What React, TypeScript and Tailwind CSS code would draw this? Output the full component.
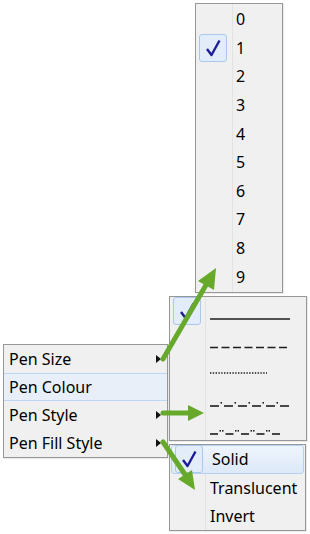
import { FC, ReactNode } from "react";

const FONT = "font-['Noto_Sans',sans-serif] text-[16px] text-black";

const Check: FC = () => (
  <div className="w-[28px] h-[28px] rounded-[3px] border border-[#a9c8ee] bg-[#e3edfa] flex items-center justify-center">
    <svg width="18" height="20" viewBox="0 0 18 20">
      <path d="M3 11 L7.5 17 L15.5 2.5" fill="none" stroke="#1d1d98" strokeWidth="2.4" strokeLinejoin="round" />
    </svg>
  </div>
);

const Arrow: FC = () => (
  <svg width="5" height="8" viewBox="0 0 5 8" className="ml-auto mr-[6px]">
    <path d="M0 0 L5 4 L0 8 Z" fill="#111" />
  </svg>
);

// gutter + separator for menus that show checks
const GutterRow: FC<{ checked?: boolean; hot?: boolean; children: ReactNode }> = ({ checked, hot, children }) => (
  <div
    className={[
      "relative flex items-center h-[28.6px]",
      hot ? "bg-gradient-to-b from-[#eef4fc] to-[#dde9f8] border border-[#b5d0f2] rounded-[3px] mx-[1px]" : "",
    ].join(" ")}
  >
    <div className="w-[34px] flex items-center justify-center shrink-0">{checked ? <Check /> : null}</div>
    <div className="pl-[6px] flex items-center">{children}</div>
  </div>
);

const NUMBERS = ["0", "1", "2", "3", "4", "5", "6", "7", "8", "9"];

const StyleLine: FC<{ kind: string }> = ({ kind }) => {
  const c = "#1e1e1e";
  if (kind === "solid")
    return (
      <svg width="82" height="29">
        <line x1="0" y1="22" x2="80" y2="22" stroke={c} strokeWidth="1.6" />
      </svg>
    );
  if (kind === "dash")
    return (
      <svg width="82" height="29">
        <line x1="0" y1="22.5" x2="80" y2="22.5" stroke={c} strokeWidth="1.6" strokeDasharray="8 3.5" />
      </svg>
    );
  if (kind === "dot")
    return (
      <svg width="82" height="29">
        <line x1="0" y1="19" x2="57" y2="19" stroke={c} strokeWidth="1.6" strokeDasharray="1.4 1.4" />
      </svg>
    );
  const dots = kind === "dashdot" ? 1 : 2;
  const seg = kind === "dashdot" ? 9 : 8;
  const step = seg + 1 + dots * 2.5 + 1.5;
  const count = kind === "dashdot" ? 6 : 5;
  return (
    <svg width="82" height="29">
      {Array.from({ length: count }).map((_, i) => {
        const x = i * step;
        return (
          <g key={i}>
            <line x1={x} y1="23" x2={x + seg} y2="23" stroke={c} strokeWidth="1.6" />
            {i < count - 1 &&
              Array.from({ length: dots }).map((__, j) => (
                <rect key={j} x={x + seg + 1.5 + j * 2.5} y="19" width="1.5" height="1.6" fill={c} />
              ))}
          </g>
        );
      })}
    </svg>
  );
};

const STYLES = ["solid", "dash", "dot", "dashdot", "dashdotdot"];

const MAIN = [
  { label: "Pen Size", sub: true },
  { label: "Pen Colour", sub: false, hot: true },
  { label: "Pen Style", sub: true },
  { label: "Pen Fill Style", sub: true },
];

const menuBox = "absolute bg-[#f0f0f0] border border-[#979797] shadow-[1px_1px_1px_rgba(0,0,0,0.08)]";

export default function App() {
  return (
    <div className={`relative w-[310px] h-[534px] bg-white overflow-hidden ${FONT}`}>
      {/* Pen Size submenu */}
      <div className={`${menuBox} left-[195px] top-[3px] w-[88px] h-[290px] pt-[1px]`}>
        <div className="absolute left-[36px] top-0 bottom-0 w-[2px] border-l border-[#e2e3e3] border-r-white" />
        {NUMBERS.map((n) => (
          <GutterRow key={n} checked={n === "1"}>
            <span className="leading-none">{n}</span>
          </GutterRow>
        ))}
      </div>

      {/* Pen Style submenu */}
      <div className={`${menuBox} left-[169px] top-[296px] w-[138px] h-[145px]`}>
        <div className="absolute left-[35px] top-0 bottom-0 w-[2px] border-l border-[#e2e3e3] border-r-white" />
        {STYLES.map((s, i) => (
          <GutterRow key={s} checked={i === 0}>
            <StyleLine kind={s} />
          </GutterRow>
        ))}
      </div>

      {/* Pen Fill Style submenu */}
      <div className={`${menuBox} left-[169px] top-[444px] w-[137px] h-[87px]`}>
        <div className="absolute left-[35px] top-0 bottom-0 w-[2px] border-l border-[#e2e3e3] border-r-white" />
        {["Solid", "Translucent", "Invert"].map((t, i) => (
          <GutterRow key={t} checked={i === 0} hot={i === 0}>
            <span className="leading-none">{t}</span>
          </GutterRow>
        ))}
      </div>

      {/* main context menu */}
      <div className={`${menuBox} left-[3px] top-[344px] w-[165px] h-[114px] flex flex-col`}>
        {MAIN.map((m) => (
          <div
            key={m.label}
            className={[
              "flex items-center h-[28.3px] pl-[5px]",
              m.hot ? "bg-[#e9eff8] border-y border-[#bcd6f5]" : "",
            ].join(" ")}
          >
            <span className="leading-none">{m.label}</span>
            {m.sub ? <Arrow /> : null}
          </div>
        ))}
      </div>

      {/* green callout arrows */}
      <svg className="absolute inset-0 pointer-events-none" width="310" height="534">
        <g fill="#67a92b" stroke="#67a92b" strokeLinecap="round">
          <line x1="163" y1="359" x2="206" y2="285" strokeWidth="5" />
          <polygon points="216,268 214,290 198,281" stroke="none" />
          <line x1="163" y1="413" x2="189" y2="413" strokeWidth="5" />
          <polygon points="204,413 188,405 188,421" stroke="none" />
          <line x1="163" y1="442" x2="186" y2="476" strokeWidth="5" />
          <polygon points="195,490 178,479 192,470" stroke="none" />
        </g>
      </svg>
    </div>
  );
}
